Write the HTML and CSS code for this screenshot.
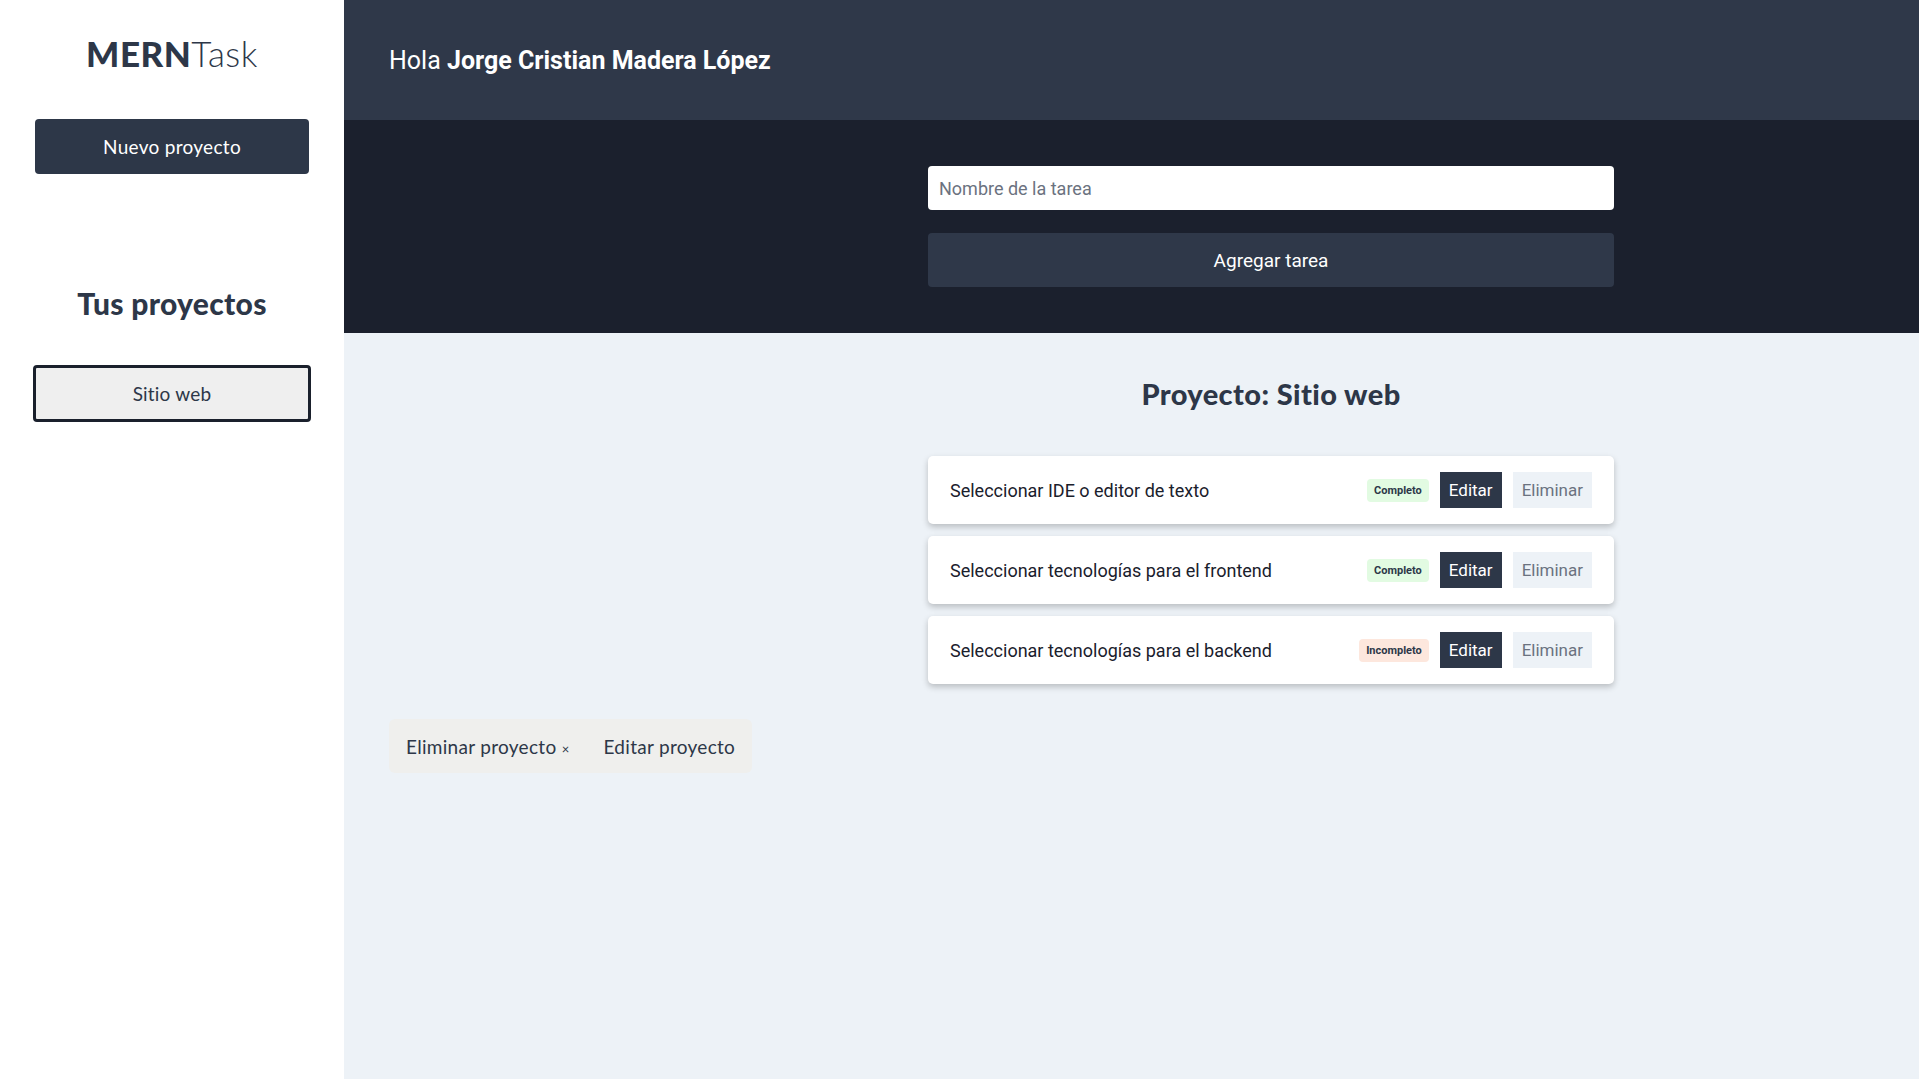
FILE: index.html
```html
<!DOCTYPE html>
<html lang="es">
<head>
<meta charset="utf-8">
<title>MERNTask</title>
<link rel="stylesheet" href="styles.css">
</head>
<body>
<div class="app">
  <aside class="sidebar">
    <h1 class="logo"><span class="logo-bold">MERN</span><span class="logo-light">Task</span></h1>
    <button class="btn-new">Nuevo proyecto</button>
    <h2 class="projects-title">Tus proyectos</h2>
    <ul class="projects">
      <li><button class="project-btn">Sitio web</button></li>
    </ul>
  </aside>
  <div class="main">
    <header class="topbar">
      <p class="greeting">Hola <strong>Jorge Cristian Madera López</strong></p>
    </header>
    <section class="form-area">
      <form class="task-form">
        <input class="task-input" type="text" placeholder="Nombre de la tarea">
        <button type="button" class="btn-add">Agregar tarea</button>
      </form>
    </section>
    <section class="content">
      <div class="tasks-col">
        <h2 class="project-title">Proyecto: Sitio web</h2>
        <ul class="tasks">
          <li class="task">
            <span class="task-name">Seleccionar IDE o editor de texto</span>
            <div class="task-actions">
              <span class="badge badge-ok">Completo</span>
              <button class="btn-edit">Editar</button>
              <button class="btn-del">Eliminar</button>
            </div>
          </li>
          <li class="task">
            <span class="task-name">Seleccionar tecnologías para el frontend</span>
            <div class="task-actions">
              <span class="badge badge-ok">Completo</span>
              <button class="btn-edit">Editar</button>
              <button class="btn-del">Eliminar</button>
            </div>
          </li>
          <li class="task">
            <span class="task-name">Seleccionar tecnologías para el backend</span>
            <div class="task-actions">
              <span class="badge badge-no">Incompleto</span>
              <button class="btn-edit">Editar</button>
              <button class="btn-del">Eliminar</button>
            </div>
          </li>
        </ul>
      </div>
      <div class="project-actions">
        <button class="pa-btn">Eliminar proyecto <span class="times">×</span></button>
        <button class="pa-btn">Editar proyecto</button>
      </div>
    </section>
  </div>
</div>
</body>
</html>
```
FILE: styles.css
```css
* { box-sizing: border-box; }
html, body { margin: 0; padding: 0; height: 100%; }
body { font-family: Roboto, "Liberation Sans", sans-serif; color: #2d3748; }
button { font: inherit; cursor: pointer; }

.app { display: flex; min-height: 100vh; }

.sidebar {
  width: 344px;
  flex-shrink: 0;
  background: #fff;
  display: flex;
  flex-direction: column;
  align-items: center;
  padding-top: 31px;
}
.logo {
  margin: 0;
  font-family: Lato, "Open Sans", sans-serif;
  font-size: 35px;
  line-height: 45px;
  letter-spacing: 0.5px;
  color: #2d3748;
  font-weight: 400;
}
.logo-bold { font-weight: 900; }
.logo-light { font-weight: 300; }
.btn-new {
  margin-top: 43px;
  width: 274px;
  height: 55px;
  background: #2d3748;
  color: #fff;
  border: none;
  border-radius: 4px;
  font-family: Lato, "Open Sans", sans-serif;
  font-size: 19px;
  letter-spacing: 0.3px;
}
.projects-title {
  margin: 111px 0 0;
  font-family: Lato, "Open Sans", sans-serif;
  font-weight: 900;
  font-size: 30px;
  line-height: 36px;
  letter-spacing: 0.3px;
  color: #2d3748;
}
.projects { list-style: none; margin: 44px 0 0; padding: 0; }
.project-btn {
  width: 278px;
  height: 57px;
  background: #efefef;
  border: 3px solid #1a202c;
  border-radius: 4px;
  color: #2d3748;
  font-family: Lato, "Open Sans", sans-serif;
  font-size: 19px;
  letter-spacing: 0.2px;
}

.main { flex: 1; display: flex; flex-direction: column; background: #edf2f7; }
.topbar {
  height: 120px;
  background: #2f3849;
  display: flex;
  align-items: center;
  padding: 0 45px;
}
.greeting {
  margin: 0;
  color: #fff;
  font-size: 25px;
  font-weight: 400;
}
.greeting strong { font-weight: 700; }

.form-area {
  background: #1b202d;
  height: 213px;
  padding: 46px 0 0 584px;
}
.task-form { width: 686px; display: flex; flex-direction: column; gap: 23px; }
.task-input {
  height: 44px;
  border: none;
  border-radius: 4px;
  padding: 0 11px;
  font-family: Roboto, sans-serif;
  font-size: 18px;
  color: #2d3748;
  outline: none;
}
.task-input::placeholder { color: #6b7280; }
.btn-add {
  height: 54px;
  border: none;
  border-radius: 4px;
  background: #2f3849;
  color: #fff;
  font-size: 19px;
}

.content { padding: 42px 0 0 45px; }
.tasks-col { margin-left: 539px; width: 686px; }
.project-title {
  margin: 0;
  text-align: center;
  font-family: Lato, "Open Sans", sans-serif;
  font-weight: 900;
  font-size: 29px;
  line-height: 38px;
  letter-spacing: 0.4px;
  color: #2d3748;
}
.tasks { list-style: none; margin: 43px 0 0; padding: 0; display: flex; flex-direction: column; gap: 12px; }
.task {
  height: 68px;
  background: #fff;
  border-radius: 5px;
  box-shadow: 0 3px 6px rgba(0,0,0,0.22);
  display: flex;
  align-items: center;
  justify-content: space-between;
  padding: 0 22px;
}
.task-name { font-size: 18px; color: #1a202c; }
.task-actions { display: flex; align-items: center; gap: 11px; }
.badge {
  height: 23px;
  padding: 0 7px;
  border-radius: 4px;
  font-size: 11px;
  font-weight: 700;
  display: inline-flex;
  align-items: center;
  color: #2d3748;
}
.badge-ok { background: #e2fbe2; }
.badge-no { background: #fde7dd; }
.btn-edit {
  height: 36px;
  padding: 0 9px;
  border: none;
  background: #2d3748;
  color: #fff;
  font-size: 17px;
}
.btn-del {
  height: 36px;
  padding: 0 9px;
  border: none;
  background: #edf2f7;
  color: #6b7280;
  font-size: 17px;
}

.project-actions {
  margin-top: 35px;
  display: inline-flex;
  gap: 8px;
  background: #efefed;
  border-radius: 6px;
  padding: 0 4px;
}
.pa-btn {
  height: 54px;
  border: none;
  background: transparent;
  font-family: Lato, "Open Sans", sans-serif;
  font-size: 19px;
  letter-spacing: 0.3px;
  color: #2d3748;
  padding: 0 13px;
}
.times { font-size: 13px; }
```
